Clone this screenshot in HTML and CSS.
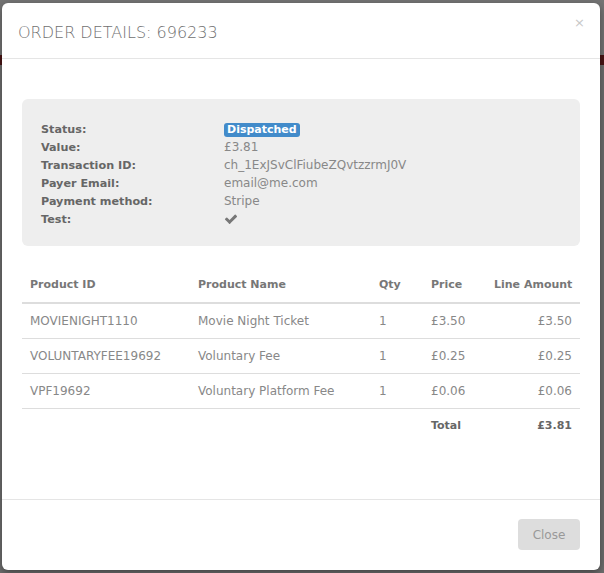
FILE: index.html
```html
<!DOCTYPE html>
<html>
<head>
    <meta charset="UTF-8">
    <title>Order Details</title>
    <link rel="stylesheet" href="styles.css">
</head>
<body>
    <div class="page">
        <div class="topbar"></div>
        <div class="redbar"></div>
    </div>

    <div class="modal">
        <div class="modal-header">
            <h4 class="modal-title">ORDER DETAILS: 696233</h4>
            <span class="close-x">&times;</span>
        </div>
        <div class="modal-body">
            <div class="summary">
                <div class="row"><span class="label">Status:</span><span class="value"><span class="badge">Dispatched</span></span></div>
                <div class="row"><span class="label">Value:</span><span class="value">&pound;3.81</span></div>
                <div class="row"><span class="label">Transaction ID:</span><span class="value">ch_1ExJSvClFiubeZQvtzzrmJ0V</span></div>
                <div class="row"><span class="label">Payer Email:</span><span class="value">email@me.com</span></div>
                <div class="row"><span class="label">Payment method:</span><span class="value">Stripe</span></div>
                <div class="row"><span class="label">Test:</span><span class="value">
                    <svg class="check" viewBox="0 0 1792 1792" width="14" height="14"><path d="M1671 566q0 40-28 68l-724 724-136 136q-28 28-68 28t-68-28l-136-136-362-362q-28-28-28-68t28-68l136-136q28-28 68-28t68 28l294 295 656-657q28-28 68-28t68 28l136 136q28 28 28 68z"/></svg>
                </span></div>
            </div>

            <table class="items">
                <colgroup>
                    <col class="c-id">
                    <col class="c-name">
                    <col class="c-qty">
                    <col class="c-price">
                    <col class="c-line">
                </colgroup>
                <thead>
                    <tr>
                        <th>Product ID</th>
                        <th>Product Name</th>
                        <th>Qty</th>
                        <th>Price</th>
                        <th class="c-amount">Line Amount</th>
                    </tr>
                </thead>
                <tbody>
                    <tr>
                        <td>MOVIENIGHT1110</td>
                        <td>Movie Night Ticket</td>
                        <td>1</td>
                        <td>&pound;3.50</td>
                        <td class="c-amount">&pound;3.50</td>
                    </tr>
                    <tr>
                        <td>VOLUNTARYFEE19692</td>
                        <td>Voluntary Fee</td>
                        <td>1</td>
                        <td>&pound;0.25</td>
                        <td class="c-amount">&pound;0.25</td>
                    </tr>
                    <tr>
                        <td>VPF19692</td>
                        <td>Voluntary Platform Fee</td>
                        <td>1</td>
                        <td>&pound;0.06</td>
                        <td class="c-amount">&pound;0.06</td>
                    </tr>
                    <tr class="total-row">
                        <td></td>
                        <td></td>
                        <td></td>
                        <th>Total</th>
                        <th class="c-amount">&pound;3.81</th>
                    </tr>
                </tbody>
            </table>
        </div>
        <div class="modal-footer">
            <button class="btn-close">Close</button>
        </div>
    </div>
</body>
</html>
```

FILE: styles.css
```css
body {
    margin: 0;
    padding: 0;
    background: #6e6e6e;
    font-family: "DejaVu Sans", sans-serif;
    color: #888;
    height: 573px;
    overflow: hidden;
}

.page {
    width: 604px;
}

.topbar {
    height: 55px;
    background: #747474;
}

.redbar {
    height: 10px;
    background: #4a1414;
}

.modal {
    position: absolute;
    left: 2px;
    top: 3px;
    width: 598px;
    height: 567px;
    background: #ffffff;
    border-radius: 6px;
    display: flex;
    flex-direction: column;
    box-shadow: 0 3px 9px rgba(0, 0, 0, 0.4);
}

.modal-header {
    position: relative;
    height: 56px;
    padding: 0 16px;
    box-sizing: border-box;
    border-bottom: 1px solid #e5e5e5;
    display: flex;
    align-items: center;
}

.modal-title {
    margin: 0;
    font-size: 16px;
    font-weight: 200;
    color: #707070;
    padding-top: 3px;
}

.close-x {
    position: absolute;
    right: 15px;
    top: 12px;
    font-size: 13px;
    color: #c8c8c8;
}

.modal-body {
    flex: 1;
    padding: 40px 20px 0;
}

.summary {
    background: #eeeeee;
    border-radius: 6px;
    padding: 21px 19px 20px;
    height: 147px;
    box-sizing: border-box;
}

.row {
    display: flex;
    height: 18px;
    align-items: center;
    font-size: 12px;
}

.label {
    width: 183px;
    font-weight: bold;
    font-size: 11.2px;
    color: #666;
}

.value {
    color: #888;
}

.badge {
    display: inline-block;
    background: #428bca;
    color: #ffffff;
    font-weight: bold;
    font-size: 11px;
    padding: 1px 3px;
    border-radius: 3px;
    line-height: 12px;
}

.check {
    fill: #777;
    display: block;
}

.items {
    width: 100%;
    margin-top: 18px;
    border-collapse: collapse;
    table-layout: fixed;
    font-size: 12px;
}

.c-id { width: 168px; }
.c-name { width: 181px; }
.c-qty { width: 52px; }
.c-price { width: 63px; }
.c-line { width: 94px; }

.items th,
.items td {
    padding: 8px;
    text-align: left;
    line-height: 18px;
    white-space: nowrap;
}

.items th {
    font-size: 11px;
    font-weight: bold;
}

.items thead th {
    color: #777;
    border-bottom: 2px solid #dddddd;
    padding-top: 12px;
    padding-bottom: 8px;
}

.items tbody td {
    color: #888;
    border-bottom: 1px solid #dddddd;
}

.items .total-row td {
    border-bottom: none;
}

.items .total-row th {
    color: #666;
}

.items .c-amount {
    text-align: right;
}

.modal-footer {
    border-top: 1px solid #e5e5e5;
    padding: 19px 20px 20px;
    display: flex;
    justify-content: flex-end;
}

.btn-close {
    background: #dddddd;
    border: none;
    border-radius: 4px;
    color: #999;
    font-family: "DejaVu Sans", sans-serif;
    font-size: 12px;
    width: 62px;
    height: 31px;
    cursor: pointer;
}
```
